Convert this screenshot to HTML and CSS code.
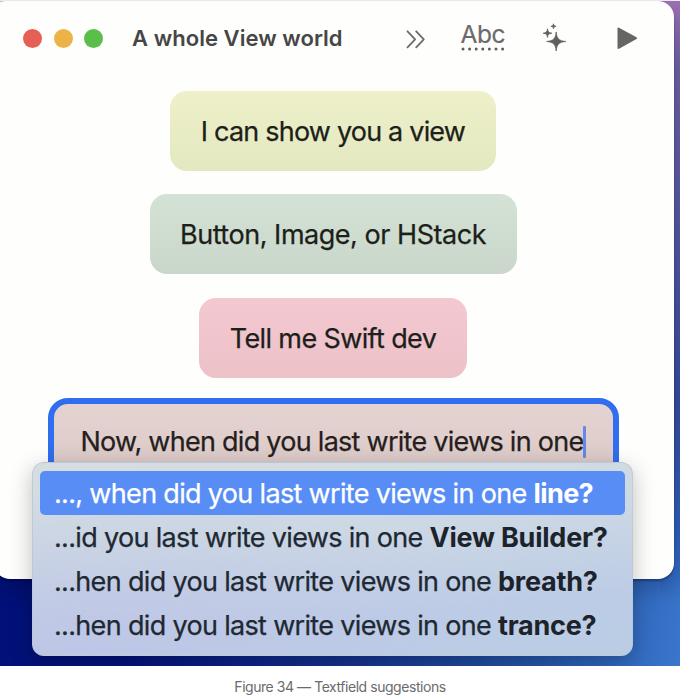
FILE: index.html
```html
<!DOCTYPE html>
<html lang="en">
<head>
<meta charset="utf-8">
<title>Textfield suggestions</title>
<link rel="stylesheet" href="styles.css">
</head>
<body>
<figure class="figure">
  <div class="desktop">
    <main class="window">
      <header class="titlebar">
        <div class="lights"><i class="light red"></i><i class="light yellow"></i><i class="light green"></i></div>
        <h1 class="title">A whole View world</h1>
        <div class="toolbar">
          <svg class="more" width="22" height="20" viewBox="0 0 22 20"><path d="M2.5 2.3l7.6 8-7.6 8M11.2 2.3l7.6 8-7.6 8"/></svg>
          <span class="abc">Abc<svg class="dots" width="44" height="4" viewBox="0 0 44 4"><path d="M2 2h42"/></svg></span>
          <svg class="sparkles" width="24" height="30" viewBox="0 0 24 30"><path d="M14.2 9C14.8 15.6 16.8 17.8 23.8 18.5 16.8 19.2 14.8 21.4 14.2 28 13.6 21.4 11.6 19.2 4.6 18.5 11.6 17.8 13.6 15.6 14.2 9ZM5.5 5.8C5.9 9 6.8 9.8 9.8 10.2 6.8 10.6 5.9 11.4 5.5 14.4 5.1 11.4 4.2 10.6 1.2 10.2 4.2 9.8 5.1 9 5.5 5.8ZM11.5.8C11.7 2.6 12.3 3.1 14.1 3.3 12.3 3.5 11.7 4 11.5 5.8 11.3 4 10.7 3.5 8.9 3.3 10.7 3.1 11.3 2.6 11.5.8Z"/></svg>
          <svg class="play" width="21" height="23" viewBox="0 0 21 23"><path d="M1.5 1.5v19.5L19 11.2z"/></svg>
        </div>
      </header>
      <section class="lines">
        <div class="bubble lime"><span>I can show you a view</span></div>
        <div class="bubble mint"><span>Button, Image, or HStack</span></div>
        <div class="bubble rose"><span>Tell me Swift dev</span></div>
        <div class="bubble field"><span>Now, when did you last write views in one</span><i class="caret"></i></div>
      </section>
    </main>
    <ul class="menu">
      <li class="item selected"><span>..., when did you last write views in one <b>line?</b></span></li>
      <li class="item"><span>...id you last write views in one <b>View Builder?</b></span></li>
      <li class="item"><span>...hen did you last write views in one <b>breath?</b></span></li>
      <li class="item"><span>...hen did you last write views in one <b>trance?</b></span></li>
    </ul>
  </div>
  <figcaption class="caption">Figure 34 — Textfield suggestions</figcaption>
</figure>
</body>
</html>
```
FILE: styles.css
```css
* { box-sizing: border-box; }
body { margin: 0; background: #fff; font-family: Inter, "Liberation Sans", sans-serif; }
.figure { margin: 0; width: 680px; height: 696px; overflow: hidden; }
.desktop {
  position: relative;
  height: 666px;
  padding-top: 1px;
  overflow: hidden;
  background:
    linear-gradient(#eeecf1, #eeecf1) 0 0 / 100% 1px no-repeat,
    linear-gradient(#c9c9cd, #c9c9cd) 0 0 / 8px 8px no-repeat,
    linear-gradient(180deg, #9b70b2 0, #6c60a0 70px, #4d559d 260px, #354b99 400px, #2c5fb5 540px, rgba(44,95,181,0) 600px) 660px 0 / 20px 100% no-repeat,
    linear-gradient(100deg, #001076 0, #03127c 30%, #14328f 58%, #2353a7 80%, #3976cc 100%);
}
.window {
  width: 680px;
  height: 578px;
  margin-left: -6px;
  border-radius: 12px 16px 16px 16px;
  background: #fefefd;
  box-shadow: 0 2px 2px rgba(0,0,30,.3), 0 12px 20px rgba(0,0,40,.2);
}
.titlebar { display: flex; align-items: center; height: 75px; padding: 0 36px 0 29px; color: #464646; }
.lights { display: flex; gap: 11.5px; }
.light { width: 19px; height: 19px; border-radius: 50%; }
.red { background: #e65f54; }
.yellow { background: #ecb447; }
.green { background: #5abf48; }
.title { margin: 0 0 1px 29px; width: 212px; font-size: 22px; font-weight: 600; letter-spacing: .05px; white-space: nowrap; }
.toolbar { display: flex; align-items: center; margin-left: 60.5px; height: 75px; }
.toolbar svg { display: block; overflow: visible; }
.more path { fill: none; stroke: #6b6b6b; stroke-width: 1.8; stroke-linecap: round; stroke-linejoin: round; }
.abc { display: block; width: 45px; margin: 0 0 5px 34px; font-size: 24.5px; line-height: 26px; letter-spacing: -.4px; color: #6b6b6b; -webkit-text-stroke: .2px; }
.dots path { stroke: #5d5d5d; stroke-width: 3; stroke-dasharray: 0 6.6; stroke-linecap: round; }
.sparkles { margin: 0 0 1px 36.5px; fill: #5f5f5f; stroke: #5f5f5f; stroke-width: .8; stroke-linejoin: round; }
.play { margin: 0 0 1px 51px; fill: #666; stroke: #666; stroke-width: 2; stroke-linejoin: round; }
.lines { display: flex; flex-direction: column; align-items: center; gap: 23.5px; padding: 14.5px 2px 0 0; }
.bubble {
  display: flex; align-items: center; justify-content: center;
  height: 80px; padding-top: 1.5px; border-radius: 17px; color: #1d1f1a;
  font-size: 27px; white-space: nowrap; -webkit-text-stroke: .25px;
}
.lime { width: 326px; letter-spacing: -.8px; background: linear-gradient(#edf0c9, #e4e8c1); }
.mint { width: 367px; letter-spacing: -.47px; background: linear-gradient(#d4e2d6, #cad6ca); }
.rose { width: 268px; letter-spacing: -.62px; background: linear-gradient(#f4c8d0, #ecc1c8); }
.field {
  width: 571px; height: 92px; margin-top: -3px; padding: 0 0 5px 27px;
  justify-content: flex-start; color: #251f20; letter-spacing: -.73px;
  border: 6px solid #316def; border-radius: 20px;
  background: linear-gradient(#e5d3d2, #dac8c6);
}
.caret { width: 3px; height: 32px; border-radius: 1px; background: #6289e6; }
.menu {
  position: absolute; left: 32px; top: 462px;
  width: 601px; height: 194px; margin: 0; padding: 8px 7px;
  list-style: none; border-radius: 12px; border: 1px solid rgba(185,196,208,.7);
  background:
    radial-gradient(ellipse at 10% 82%, rgba(190,194,230,.6), rgba(190,194,230,0) 55%),
    linear-gradient(174deg, #d5dee1 0, #ccd8e4 40%, #bdcce6 75%, #bacde5 100%);
  box-shadow: 0 6px 22px rgba(0,0,0,.26);
}
.item { display: flex; align-items: center; height: 44px; padding: 1px 0 0 14px; font-size: 27px; letter-spacing: -.67px; white-space: nowrap; color: #202832; -webkit-text-stroke: .25px; }
.item b { font-weight: 700; letter-spacing: -.23px; color: #1c232a; -webkit-text-stroke: 0; }
.selected b { letter-spacing: -.6px; }
.selected, .selected b { color: #fff; }
.selected { border-radius: 5px; background: #588df6; }
.caption { height: 30px; padding-top: 11px; text-align: center; font-size: 14px; line-height: 20px; letter-spacing: -.45px; color: #6b6b6b; }
```
